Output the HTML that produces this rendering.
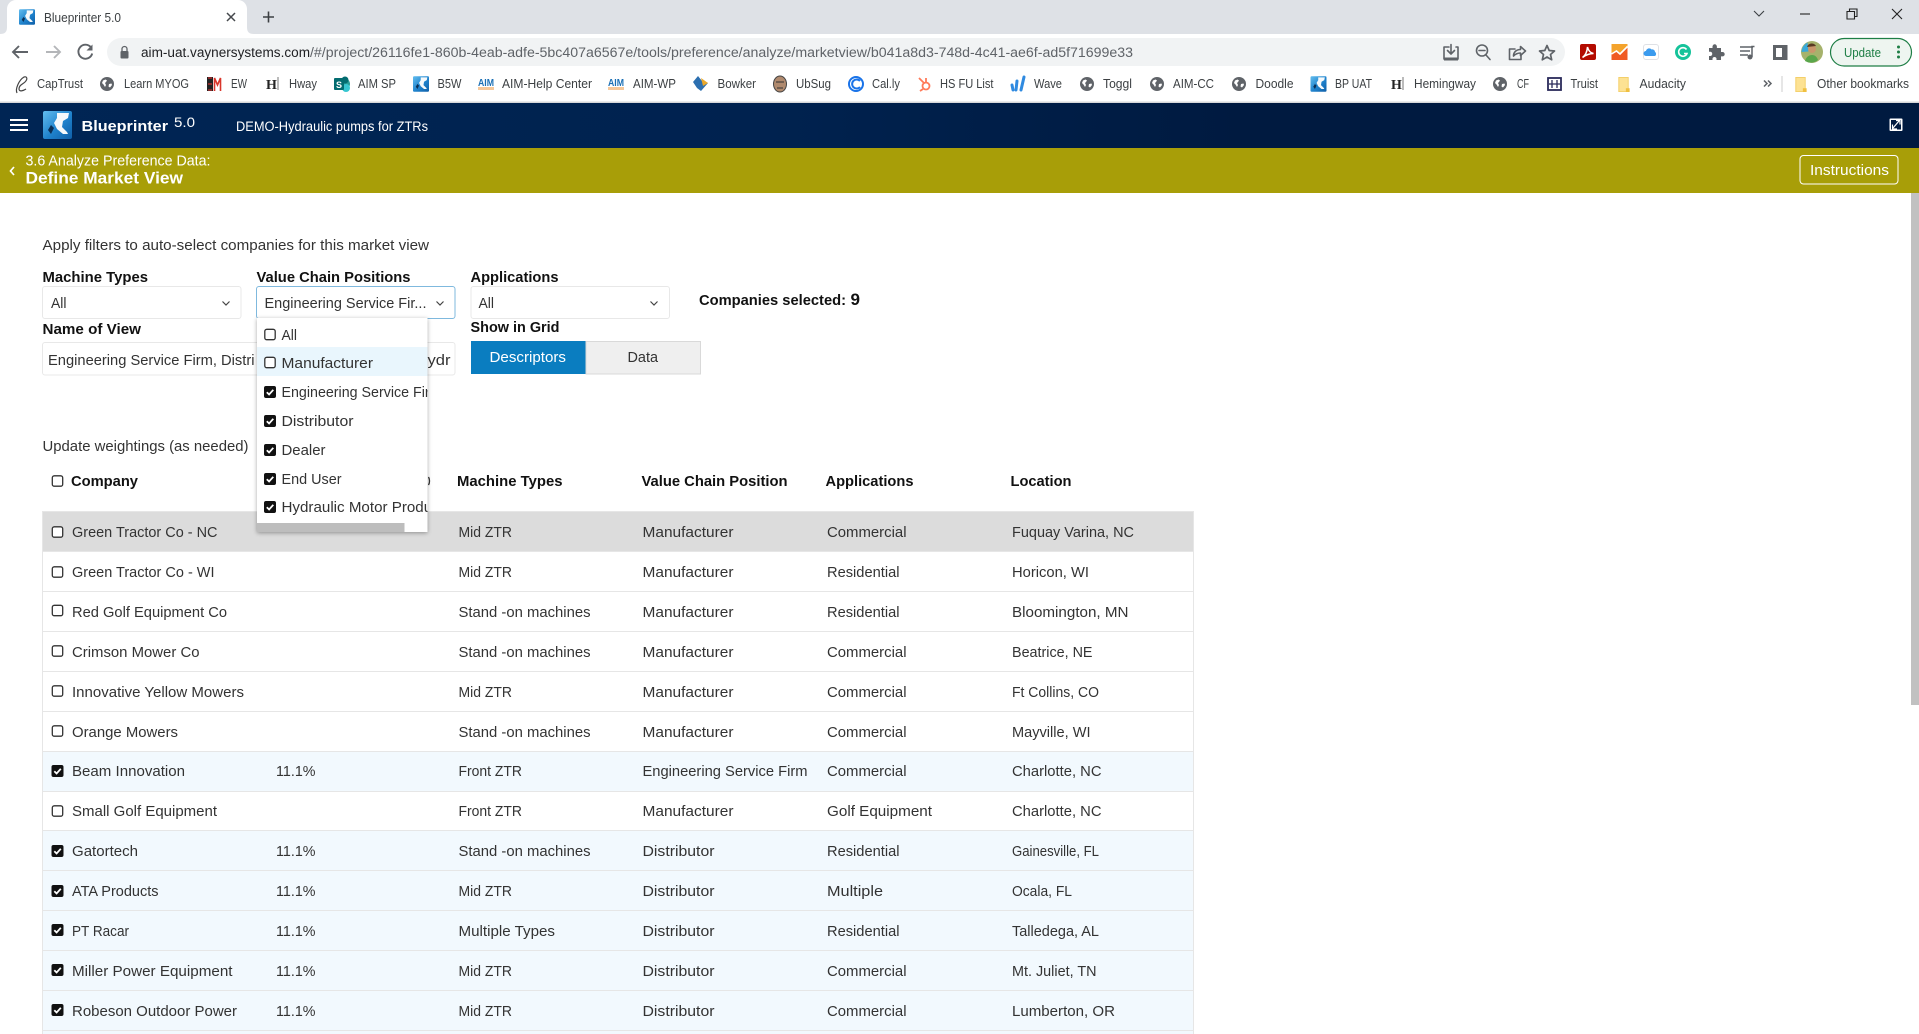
<!DOCTYPE html>
<html lang="en"><head><meta charset="utf-8"><title>Blueprinter 5.0</title>
<style>
html,body{margin:0;padding:0;background:#fff;width:1919px;height:1034px;overflow:hidden}
svg{display:block}
text{font-family:"Liberation Sans",Arial,sans-serif;font-size:14.5px;fill:#333;white-space:pre}
.b{font-weight:700;fill:#111}
.bm{font-size:12.5px;fill:#3c4043}
.w{fill:#fff}
.l{stroke:#5f6368;fill:none;stroke-width:1.6;stroke-linecap:round;stroke-linejoin:round}
</style></head><body>
<svg xmlns="http://www.w3.org/2000/svg" width="1919" height="1034" viewBox="0 0 1919 1034">
<defs>
<linearGradient id="hg" x1="0" x2="1" y1="0" y2="0"><stop offset="0" stop-color="#002554"/><stop offset=".4" stop-color="#00224f"/><stop offset=".65" stop-color="#001a40"/><stop offset="1" stop-color="#001a40"/></linearGradient>
<linearGradient id="lg" x1="0" x2="1" y1="0" y2="1"><stop offset="0" stop-color="#62bdef"/><stop offset=".55" stop-color="#1f82cc"/><stop offset="1" stop-color="#0f5fa8"/></linearGradient>
<symbol id="logo" viewBox="0 0 29 28"><rect width="29" height="28" rx="2" fill="url(#lg)"/><path d="M14 2h12l-1 5-5 3-1 6 5 5 1 2h-5l-6-5-3-6 3-5z" fill="#f6f9fb"/><path d="M5 19l3-5 3 3-3 6z" fill="#0b2f55"/></symbol>
<symbol id="globe" viewBox="0 0 14 14"><circle cx="7" cy="7" r="7" fill="#5f6368"/><path d="M3 3.500l2.500-1 1.500 1L6 5 5 6l1 2-1 2-1.500-2.500L2 6zM9 7l2.500-.5.500 1.500-2 2.500-1.500-1z" fill="#fff"/></symbol>
<symbol id="c0" viewBox="0 0 12 12"><rect x=".8" y=".8" width="10.400" height="10.400" rx="2" fill="#fff" stroke="#333" stroke-width="1.300"/></symbol>
<symbol id="c1" viewBox="0 0 12 12"><rect width="12" height="12" rx="2" fill="#111"/><path d="M2.800 6.200l2.300 2.300 4.200-4.700" fill="none" stroke="#fff" stroke-width="1.800"/></symbol>
<symbol id="fold" viewBox="0 0 12 16"><path d="M0 0h10.500v16H0z" fill="#fde293"/><path d="M.5.500h10v15h-10z" fill="none" stroke="#f3cf6a"/><rect x="8" y="12" width="4" height="4" fill="#f0c040"/></symbol>
<clipPath id="dd"><rect x="257" y="318" width="170.500" height="205"/></clipPath>
<filter id="sh" x="-10%" y="-10%" width="120%" height="120%"><feDropShadow dx="0" dy="1" stdDeviation="2" flood-color="#000" flood-opacity=".35"/></filter>
</defs>

<!-- tab strip -->
<rect width="1919" height="34" fill="#dee1e6"/>
<path d="M0 34c5 0 7-2 7-7V9c0-5 4-9 9-9h222c5 0 9 4 9 9v18c0 5 2 7 7 7z" fill="#fff"/>
<use href="#logo" x="19" y="9" width="16" height="16"/>
<text x="44" y="22" textLength="77" lengthAdjust="spacingAndGlyphs" style="font-size:12.5px;fill:#3c4043">Blueprinter 5.0</text>
<path d="M227 13l8 8M235 13l-8 8" stroke="#45484c" stroke-width="1.500" fill="none"/>
<path d="M263 17h11M268.500 11.500v11" stroke="#3c4043" stroke-width="1.600" fill="none"/>
<path d="M1754 11l5 5 5-5" stroke="#3c4043" fill="none" stroke-width="1.100"/>
<path d="M1800 14h10" stroke="#222" stroke-width="1.100"/>
<path d="M1847 11.500h7.500v7.500h-7.500zM1849.500 11.500v-2.500h7.500v7.500h-2.500" stroke="#222" fill="none" stroke-width="1.100"/>
<path d="M1892 9l10 10M1902 9l-10 10" stroke="#222" fill="none" stroke-width="1.100"/>

<!-- toolbar -->
<rect y="34" width="1919" height="68" fill="#fff"/>
<path d="M28 52H13M19 46l-6 6 6 6" stroke="#5f6368" stroke-width="1.900" fill="none"/>
<path d="M46 52h14M54 46l6 6-6 6" stroke="#b4b6b9" stroke-width="1.900" fill="none"/>
<path d="M91 47.500a7 7 0 1 0 1.200 6" stroke="#5f6368" stroke-width="1.900" fill="none"/><path d="M92.500 44.500v6h-6z" fill="#5f6368"/>
<rect x="107" y="38" width="1458" height="28" rx="14" fill="#f1f3f4"/>
<rect x="120.500" y="51" width="8" height="7.500" rx="1" fill="#5f6368"/><path d="M122 51v-2a2.500 2.500 0 0 1 5 0v2" stroke="#5f6368" stroke-width="1.300" fill="none"/>
<text x="141" y="57" textLength="169" lengthAdjust="spacingAndGlyphs" style="font-size:13.500px;fill:#202124">aim-uat.vaynersystems.com</text>
<text x="310" y="57" textLength="823" lengthAdjust="spacingAndGlyphs" style="font-size:13.500px;fill:#5f6368">/#/project/26116fe1-860b-4eab-adfe-5bc407a6567e/tools/preference/analyze/marketview/b041a8d3-748d-4c41-ae6f-ad5f71699e33</text>
<path class="l" d="M1449 47h-5v12h14v-12h-2M1451 44.500v9M1447.500 50.500l3.500 3.500 3.500-3.500"/><path d="M1444 57.500h14v3h-14z" fill="#5f6368"/>
<circle class="l" cx="1482" cy="50.500" r="5.500"/><path class="l" d="M1479 50.500h6M1486 55l4 4.500"/>
<path class="l" d="M1515 49h-5.500v10.500h11.500v-5"/><path class="l" d="M1513.500 56c0-4 3-6.500 7-6.500V46.500l5 4.500-5 4.500V53c-3 0-5 1-7 3z"/>
<path d="M1547 45.500l2.200 5 5.300.5-4 3.500 1.200 5.300-4.700-2.800-4.700 2.800 1.200-5.300-4-3.500 5.300-.5z" fill="none" stroke="#5f6368" stroke-width="1.700" stroke-linejoin="round"/>
<rect x="1580" y="44" width="16" height="16" rx="2" fill="#b30b00"/><path d="M1582.500 57.500c3-2 4.500-5 5-10.500 1 4 3 6 6 6.500-3.500 0-7 1-11 4z" fill="none" stroke="#fff" stroke-width="1.500"/>
<rect x="1611.500" y="44" width="16" height="16" fill="#f4a32c"/><path d="M1611.500 54l5-3 3.500 3 7.500-7.500V60h-16z" fill="#f05a22"/><path d="M1611.500 54l5-3 3.500 3 7.500-7.500" stroke="#fff" stroke-width="1.600" fill="none"/>
<rect x="1643.500" y="44.500" width="15" height="15" rx="2.500" fill="#fff" stroke="#dfe1e5"/><path d="M1646 56a2.500 2.500 0 0 1 0-5c.5-2.500 4-3.500 5.500-1.500 2-.5 3.500 1 3.500 2.500 1.500.5 1.500 4-.5 4z" fill="#3b9bee"/>
<circle cx="1683" cy="52" r="8" fill="#15c39a"/><path d="M1686.500 49.500a4.300 4.300 0 1 0 .5 4h-3" stroke="#fff" stroke-width="1.600" fill="none"/>
<path d="M1709 48h3.500v-1.500a2.200 2.200 0 0 1 4.400 0V48h4.100v4h1.500a2.200 2.200 0 0 1 0 4.400H1721v3.600h-4.500v-1.500a2.100 2.100 0 0 0-4 0V60H1709v-4h1.500a2.200 2.200 0 0 0 0-4.300H1709z" fill="#5f6368"/>
<path d="M1740 47h13M1740 51h10M1740 55h8" stroke="#5f6368" stroke-width="1.500"/><path d="M1754.500 46.500h-2.500v10.500" stroke="#5f6368" stroke-width="1.500" fill="none"/><circle cx="1750" cy="57" r="2.500" fill="#5f6368"/>
<rect x="1774.500" y="46.500" width="11.500" height="12" fill="none" stroke="#5f6368" stroke-width="3"/><rect x="1782" y="46" width="4.500" height="13" fill="#5f6368"/>
<circle cx="1812" cy="52" r="11" fill="#a6b26c"/><path d="M1801.500 52a11 11 0 0 1 6-9.500l1 9z" fill="#3aa8d8"/><path d="M1805 61c1-4 4-6 7-6s5 2 6 5a11 11 0 0 1-13 1z" fill="#5aa64b"/><circle cx="1812" cy="49" r="4" fill="#c9966b"/><path d="M1807 47c1-4 7-5 9-1z" fill="#5a3a22"/>
<rect x="1830.500" y="38.500" width="81" height="27.500" rx="13.700" fill="#eef5f0" stroke="#1e7e45" stroke-width="1.200"/>
<text x="1844" y="57" textLength="37" lengthAdjust="spacingAndGlyphs" style="font-size:12.500px;fill:#1e7e45">Update</text>
<circle cx="1898.500" cy="47" r="1.500" fill="#1e7e45"/><circle cx="1898.500" cy="52" r="1.500" fill="#1e7e45"/><circle cx="1898.500" cy="57" r="1.500" fill="#1e7e45"/>

<!-- bookmarks -->
<path d="M17 93c-2-4 2-13 7-16 3-1 4 2 1 5-2 2-6 3-6 7 0 3 4 2 7 0" fill="none" stroke="#444" stroke-width="1.200"/>
<text class="bm" x="37" y="88" textLength="46" lengthAdjust="spacingAndGlyphs">CapTrust</text>
<use href="#globe" x="100" y="77" width="14" height="14"/>
<text class="bm" x="124" y="88" textLength="65" lengthAdjust="spacingAndGlyphs">Learn MYOG</text>
<rect x="207" y="77" width="6" height="14" fill="#222"/><path d="M208 78h4M208 84h4M208 90h4" stroke="#e33" stroke-width="1"/><path d="M214.500 91V78l3 7 3-7v13" stroke="#d9362b" stroke-width="1.600" fill="none"/>
<text class="bm" x="231" y="88" textLength="16" lengthAdjust="spacingAndGlyphs">EW</text>
<text x="266" y="89" style="font-family:'Liberation Serif',serif;font-size:14px;font-weight:700;fill:#222">H</text><path d="M278 77v13" stroke="#777"/>
<text class="bm" x="289" y="88" textLength="28" lengthAdjust="spacingAndGlyphs">Hway</text>
<circle cx="344" cy="84" r="6" fill="#2a9d97"/><circle cx="346" cy="88" r="4" fill="#37c6d0"/><circle cx="345" cy="80" r="3.500" fill="#036c70"/><rect x="334" y="78" width="10" height="12" rx="1" fill="#036c70"/>
<text x="336" y="88" style="font-size:9px;font-weight:700;fill:#fff">S</text>
<text class="bm" x="358" y="88" textLength="38" lengthAdjust="spacingAndGlyphs">AIM SP</text>
<use href="#logo" x="413" y="76" width="16" height="16"/>
<text class="bm" x="437.500" y="88" textLength="24" lengthAdjust="spacingAndGlyphs">B5W</text>
<text x="478" y="86" textLength="16" lengthAdjust="spacingAndGlyphs" style="font-size:10px;font-weight:700;fill:#1a6fb5">AIM</text><rect x="478" y="87" width="16" height="3" fill="#f6c89a"/>
<text class="bm" x="502" y="88" textLength="90" lengthAdjust="spacingAndGlyphs">AIM-Help Center</text>
<text x="608" y="86" textLength="16" lengthAdjust="spacingAndGlyphs" style="font-size:10px;font-weight:700;fill:#1a6fb5">AIM</text><rect x="608" y="87" width="16" height="3" fill="#f6c89a"/>
<text class="bm" x="633" y="88" textLength="43" lengthAdjust="spacingAndGlyphs">AIM-WP</text>
<path d="M693 82l5-6 4 5 6 2-7 8-4-3z" fill="#2c6fb0"/><path d="M701 78l7 5-5 3z" fill="#e9a82c"/>
<text class="bm" x="717.500" y="88" textLength="38.500" lengthAdjust="spacingAndGlyphs">Bowker</text>
<ellipse cx="780" cy="84" rx="6.500" ry="8" fill="#b08a6e" stroke="#444"/><path d="M776 82h8M777 88h6" stroke="#333"/>
<text class="bm" x="796" y="88" textLength="35" lengthAdjust="spacingAndGlyphs">UbSug</text>
<circle cx="856" cy="84" r="7" fill="none" stroke="#1a73e8" stroke-width="2"/><path d="M860 81a4.500 4.500 0 1 0 0 6" fill="none" stroke="#1a73e8" stroke-width="2"/>
<text class="bm" x="872" y="88" textLength="28" lengthAdjust="spacingAndGlyphs">Cal.ly</text>
<circle cx="926" cy="86" r="3.500" fill="none" stroke="#ff7a59" stroke-width="1.800"/><path d="M924 83l-5-5M926 82v-4" stroke="#ff7a59" stroke-width="1.800"/><path d="M923 89l-3 2" stroke="#ff7a59" stroke-width="1.800"/>
<text class="bm" x="940" y="88" textLength="53.500" lengthAdjust="spacingAndGlyphs">HS FU List</text>
<path d="M1012 85l1 5M1017 81l-1 9M1024 77l-3 13" stroke="#2f8ae0" stroke-width="3" stroke-linecap="round"/>
<text class="bm" x="1034" y="88" textLength="28" lengthAdjust="spacingAndGlyphs">Wave</text>
<use href="#globe" x="1080" y="77" width="14" height="14"/>
<text class="bm" x="1103" y="88" textLength="29" lengthAdjust="spacingAndGlyphs">Toggl</text>
<use href="#globe" x="1150" y="77" width="14" height="14"/>
<text class="bm" x="1173" y="88" textLength="41" lengthAdjust="spacingAndGlyphs">AIM-CC</text>
<use href="#globe" x="1232" y="77" width="14" height="14"/>
<text class="bm" x="1255.500" y="88" textLength="38" lengthAdjust="spacingAndGlyphs">Doodle</text>
<use href="#logo" x="1310.500" y="76" width="16" height="16"/>
<text class="bm" x="1335" y="88" textLength="37" lengthAdjust="spacingAndGlyphs">BP UAT</text>
<text x="1391" y="89" style="font-family:'Liberation Serif',serif;font-size:14px;font-weight:700;fill:#222">H</text><path d="M1403 77v13" stroke="#777"/>
<text class="bm" x="1414" y="88" textLength="62" lengthAdjust="spacingAndGlyphs">Hemingway</text>
<use href="#globe" x="1493" y="77" width="14" height="14"/>
<text class="bm" x="1517" y="88" textLength="12" lengthAdjust="spacingAndGlyphs">CF</text>
<rect x="1548" y="78" width="13" height="12" fill="none" stroke="#2a2a5a" stroke-width="1.800"/><path d="M1552 80v8M1557 80v8M1549 84h11" stroke="#2a2a5a" stroke-width="1.300"/>
<text class="bm" x="1570.500" y="88" textLength="27.500" lengthAdjust="spacingAndGlyphs">Truist</text>
<use href="#fold" x="1618" y="77" width="12" height="15"/>
<text class="bm" x="1639.500" y="88" textLength="46.500" lengthAdjust="spacingAndGlyphs">Audacity</text>
<path d="M1764 80.500l3 3-3 3M1768 80.500l3 3-3 3" stroke="#5f6368" stroke-width="1.500" fill="none"/>
<path d="M1782 76v16" stroke="#ccc"/>
<use href="#fold" x="1795" y="77" width="12" height="15"/>
<text class="bm" x="1817" y="88" textLength="92" lengthAdjust="spacingAndGlyphs">Other bookmarks</text>
<rect y="101.500" width="1919" height="1.500" fill="#d7d8da"/>

<!-- app header -->
<rect y="103" width="1919" height="45" fill="url(#hg)"/>
<path d="M10 120h18M10 125h18M10 130h18" stroke="#fff" stroke-width="2"/>
<use href="#logo" x="43" y="111" width="29" height="28"/>
<text class="w" x="81.500" y="131" textLength="86.500" lengthAdjust="spacingAndGlyphs" style="font-weight:700">Blueprinter</text>
<text class="w" x="174" y="127" textLength="21" lengthAdjust="spacingAndGlyphs" style="font-size:14px">5.0</text>
<text class="w" x="236" y="131" textLength="192" lengthAdjust="spacingAndGlyphs" style="font-size:13.500px">DEMO-Hydraulic pumps for ZTRs</text>
<rect x="1889.500" y="118.500" width="13" height="12.500" rx="1" fill="#fff"/><rect x="1891" y="120" width="10" height="9.500" fill="#001a40"/><path d="M1893 128l6-7M1896 120.500h4v4M1892.500 124.500v4.500h4.500" stroke="#fff" stroke-width="1.200" fill="none"/>

<!-- olive bar -->
<rect y="148" width="1919" height="45" fill="#a89e08"/>
<path d="M14 167l-3.500 4 3.500 4" stroke="#fff" stroke-width="1.700" fill="none"/>
<text class="w" x="25.500" y="165.500" textLength="185" lengthAdjust="spacingAndGlyphs">3.6 Analyze Preference Data:</text>
<text class="w" x="25.500" y="183.500" textLength="157.500" lengthAdjust="spacingAndGlyphs" style="font-size:16.500px;font-weight:700">Define Market View</text>
<rect x="1800" y="155.500" width="98" height="28.500" rx="3.500" fill="none" stroke="#fff" stroke-width="1"/>
<text class="w" x="1810" y="175" textLength="79" lengthAdjust="spacingAndGlyphs">Instructions</text>

<!-- page scrollbar -->
<rect x="1911" y="193" width="8" height="512" fill="#c1c1c1"/>

<!-- filters -->
<text x="42.500" y="250" textLength="386.500" lengthAdjust="spacingAndGlyphs">Apply filters to auto-select companies for this market view</text>
<text class="b" x="42.500" y="282" textLength="105.500" lengthAdjust="spacingAndGlyphs">Machine Types</text>
<text class="b" x="256.500" y="282" textLength="154" lengthAdjust="spacingAndGlyphs">Value Chain Positions</text>
<text class="b" x="470.500" y="282" textLength="88" lengthAdjust="spacingAndGlyphs">Applications</text>

<rect x="42.500" y="286.500" width="198.500" height="32" rx="2.500" fill="#fff" stroke="#e8e8e8"/>
<text x="51" y="308" textLength="15.500" lengthAdjust="spacingAndGlyphs">All</text>
<path d="M222.500 301.500l3.500 3.500 3.500-3.500" stroke="#444" stroke-width="1.200" fill="none"/>
<rect x="256.500" y="286.500" width="198.500" height="32" rx="2.500" fill="#fff" stroke="#7fb9de"/>
<text x="264.500" y="308" textLength="162" lengthAdjust="spacingAndGlyphs">Engineering Service Fir...</text>
<path d="M436.500 301.500l3.500 3.500 3.500-3.500" stroke="#444" stroke-width="1.200" fill="none"/>
<rect x="471" y="286.500" width="198.500" height="32" rx="2.500" fill="#fff" stroke="#e8e8e8"/>
<text x="478.500" y="308" textLength="15.500" lengthAdjust="spacingAndGlyphs">All</text>
<path d="M650.500 301.500l3.500 3.500 3.500-3.500" stroke="#444" stroke-width="1.200" fill="none"/>

<text class="b" x="699" y="305" textLength="147" lengthAdjust="spacingAndGlyphs">Companies selected:</text>
<text class="b" x="850.500" y="305" textLength="9.500" lengthAdjust="spacingAndGlyphs" style="font-size:17px">9</text>

<text class="b" x="42.500" y="334" textLength="98.500" lengthAdjust="spacingAndGlyphs">Name of View</text>
<rect x="42.500" y="342.500" width="412.500" height="32.500" rx="2.500" fill="#fff" stroke="#e8e8e8"/>
<text x="48" y="365" textLength="206.500" lengthAdjust="spacingAndGlyphs">Engineering Service Firm, Distri</text>
<text x="427.500" y="365" textLength="23" lengthAdjust="spacingAndGlyphs">ydr</text>

<text class="b" x="470.500" y="332" textLength="89" lengthAdjust="spacingAndGlyphs">Show in Grid</text>
<rect x="471" y="341" width="115" height="33" fill="#0a7dc0"/>
<rect x="586" y="341.500" width="114.500" height="32.500" fill="#efefef" stroke="#d9d9d9"/>
<text class="w" x="489.500" y="362" textLength="76.500" lengthAdjust="spacingAndGlyphs">Descriptors</text>
<text x="627.500" y="362" textLength="30.500" lengthAdjust="spacingAndGlyphs">Data</text>

<text x="42.500" y="451" textLength="206" lengthAdjust="spacingAndGlyphs">Update weightings (as needed)</text>

<!-- table header -->
<use href="#c0" x="51.500" y="475" width="12" height="12"/>
<text class="b" x="71" y="486" textLength="67" lengthAdjust="spacingAndGlyphs">Company</text>
<path d="M428.500 477a4 6 0 0 1 0 8" stroke="#333" stroke-width="1.300" fill="none"/>
<text class="b" x="457" y="486" textLength="105.500" lengthAdjust="spacingAndGlyphs">Machine Types</text>
<text class="b" x="641.500" y="486" textLength="146" lengthAdjust="spacingAndGlyphs">Value Chain Position</text>
<text class="b" x="825.500" y="486" textLength="88" lengthAdjust="spacingAndGlyphs">Applications</text>
<text class="b" x="1010.500" y="486" textLength="61" lengthAdjust="spacingAndGlyphs">Location</text>

<!-- table rows backgrounds -->
<rect x="42" y="511" width="1152" height="40" fill="#dcdcdc"/>
<rect x="42" y="751" width="1152" height="40" fill="#f2f9fe"/>
<rect x="42" y="830" width="1152" height="204" fill="#f2f9fe"/>
<path d="M42 511.500h1152M42 551.500h1152M42 591.500h1152M42 631.500h1152M42 671.500h1152M42 711.500h1152M42 751.500h1152M42 791.500h1152M42 830.500h1152M42 870.500h1152M42 910.500h1152M42 950.500h1152M42 990.500h1152M42 1030.500h1152" stroke="#e6e6e6"/>
<path d="M42.500 511v523M1193.500 511v523" stroke="#e6e6e6"/>

<!-- row 1 -->
<use href="#c0" x="51.500" y="526" width="12" height="12"/>
<text x="72" y="537" textLength="145.500" lengthAdjust="spacingAndGlyphs">Green Tractor Co - NC</text>
<text x="458.500" y="537" textLength="53.500" lengthAdjust="spacingAndGlyphs">Mid ZTR</text>
<text x="642.500" y="537" textLength="91" lengthAdjust="spacingAndGlyphs">Manufacturer</text>
<text x="827" y="537" textLength="79.500" lengthAdjust="spacingAndGlyphs">Commercial</text>
<text x="1012" y="537" textLength="122" lengthAdjust="spacingAndGlyphs">Fuquay Varina, NC</text>
<!-- row 2 -->
<use href="#c0" x="51.500" y="566" width="12" height="12"/>
<text x="72" y="577" textLength="142.500" lengthAdjust="spacingAndGlyphs">Green Tractor Co - WI</text>
<text x="458.500" y="577" textLength="53.500" lengthAdjust="spacingAndGlyphs">Mid ZTR</text>
<text x="642.500" y="577" textLength="91" lengthAdjust="spacingAndGlyphs">Manufacturer</text>
<text x="827" y="577" textLength="72.500" lengthAdjust="spacingAndGlyphs">Residential</text>
<text x="1012" y="577" textLength="77" lengthAdjust="spacingAndGlyphs">Horicon, WI</text>
<!-- row 3 -->
<use href="#c0" x="51.500" y="604.500" width="12" height="12"/>
<text x="72" y="617" textLength="155" lengthAdjust="spacingAndGlyphs">Red Golf Equipment Co</text>
<text x="458.500" y="617" textLength="132" lengthAdjust="spacingAndGlyphs">Stand -on machines</text>
<text x="642.500" y="617" textLength="91" lengthAdjust="spacingAndGlyphs">Manufacturer</text>
<text x="827" y="617" textLength="72.500" lengthAdjust="spacingAndGlyphs">Residential</text>
<text x="1012" y="617" textLength="116.500" lengthAdjust="spacingAndGlyphs">Bloomington, MN</text>
<!-- row 4 -->
<use href="#c0" x="51.500" y="645" width="12" height="12"/>
<text x="72" y="657" textLength="127.500" lengthAdjust="spacingAndGlyphs">Crimson Mower Co</text>
<text x="458.500" y="657" textLength="132" lengthAdjust="spacingAndGlyphs">Stand -on machines</text>
<text x="642.500" y="657" textLength="91" lengthAdjust="spacingAndGlyphs">Manufacturer</text>
<text x="827" y="657" textLength="79.500" lengthAdjust="spacingAndGlyphs">Commercial</text>
<text x="1012" y="657" textLength="80.500" lengthAdjust="spacingAndGlyphs">Beatrice, NE</text>
<!-- row 5 -->
<use href="#c0" x="51.500" y="685" width="12" height="12"/>
<text x="72" y="697" textLength="172" lengthAdjust="spacingAndGlyphs">Innovative Yellow Mowers</text>
<text x="458.500" y="697" textLength="53.500" lengthAdjust="spacingAndGlyphs">Mid ZTR</text>
<text x="642.500" y="697" textLength="91" lengthAdjust="spacingAndGlyphs">Manufacturer</text>
<text x="827" y="697" textLength="79.500" lengthAdjust="spacingAndGlyphs">Commercial</text>
<text x="1012" y="697" textLength="87" lengthAdjust="spacingAndGlyphs">Ft Collins, CO</text>
<!-- row 6 -->
<use href="#c0" x="51.500" y="725" width="12" height="12"/>
<text x="72" y="737" textLength="106" lengthAdjust="spacingAndGlyphs">Orange Mowers</text>
<text x="458.500" y="737" textLength="132" lengthAdjust="spacingAndGlyphs">Stand -on machines</text>
<text x="642.500" y="737" textLength="91" lengthAdjust="spacingAndGlyphs">Manufacturer</text>
<text x="827" y="737" textLength="79.500" lengthAdjust="spacingAndGlyphs">Commercial</text>
<text x="1012" y="737" textLength="78.500" lengthAdjust="spacingAndGlyphs">Mayville, WI</text>
<!-- row 7 -->
<use href="#c1" x="51.500" y="765" width="12" height="12"/>
<text x="72" y="776" textLength="113" lengthAdjust="spacingAndGlyphs">Beam Innovation</text>
<text x="276" y="776" textLength="39.500" lengthAdjust="spacingAndGlyphs">11.1%</text>
<text x="458.500" y="776" textLength="63.500" lengthAdjust="spacingAndGlyphs">Front ZTR</text>
<text x="642.500" y="776" textLength="165" lengthAdjust="spacingAndGlyphs">Engineering Service Firm</text>
<text x="827" y="776" textLength="79.500" lengthAdjust="spacingAndGlyphs">Commercial</text>
<text x="1012" y="776" textLength="89.500" lengthAdjust="spacingAndGlyphs">Charlotte, NC</text>
<!-- row 8 -->
<use href="#c0" x="51.500" y="805" width="12" height="12"/>
<text x="72" y="816" textLength="145" lengthAdjust="spacingAndGlyphs">Small Golf Equipment</text>
<text x="458.500" y="816" textLength="63.500" lengthAdjust="spacingAndGlyphs">Front ZTR</text>
<text x="642.500" y="816" textLength="91" lengthAdjust="spacingAndGlyphs">Manufacturer</text>
<text x="827" y="816" textLength="105" lengthAdjust="spacingAndGlyphs">Golf Equipment</text>
<text x="1012" y="816" textLength="89.500" lengthAdjust="spacingAndGlyphs">Charlotte, NC</text>
<!-- row 9 -->
<use href="#c1" x="51.500" y="845" width="12" height="12"/>
<text x="72" y="856" textLength="66" lengthAdjust="spacingAndGlyphs">Gatortech</text>
<text x="276" y="856" textLength="39.500" lengthAdjust="spacingAndGlyphs">11.1%</text>
<text x="458.500" y="856" textLength="132" lengthAdjust="spacingAndGlyphs">Stand -on machines</text>
<text x="642.500" y="856" textLength="72" lengthAdjust="spacingAndGlyphs">Distributor</text>
<text x="827" y="856" textLength="72.500" lengthAdjust="spacingAndGlyphs">Residential</text>
<text x="1012" y="856" textLength="87" lengthAdjust="spacingAndGlyphs">Gainesville, FL</text>
<!-- row 10 -->
<use href="#c1" x="51.500" y="885" width="12" height="12"/>
<text x="72" y="896" textLength="86.500" lengthAdjust="spacingAndGlyphs">ATA Products</text>
<text x="276" y="896" textLength="39.500" lengthAdjust="spacingAndGlyphs">11.1%</text>
<text x="458.500" y="896" textLength="53.500" lengthAdjust="spacingAndGlyphs">Mid ZTR</text>
<text x="642.500" y="896" textLength="72" lengthAdjust="spacingAndGlyphs">Distributor</text>
<text x="827" y="896" textLength="56" lengthAdjust="spacingAndGlyphs">Multiple</text>
<text x="1012" y="896" textLength="60" lengthAdjust="spacingAndGlyphs">Ocala, FL</text>
<!-- row 11 -->
<use href="#c1" x="51.500" y="924" width="12" height="12"/>
<text x="72" y="936" textLength="57" lengthAdjust="spacingAndGlyphs">PT Racar</text>
<text x="276" y="936" textLength="39.500" lengthAdjust="spacingAndGlyphs">11.1%</text>
<text x="458.500" y="936" textLength="96.500" lengthAdjust="spacingAndGlyphs">Multiple Types</text>
<text x="642.500" y="936" textLength="72" lengthAdjust="spacingAndGlyphs">Distributor</text>
<text x="827" y="936" textLength="72.500" lengthAdjust="spacingAndGlyphs">Residential</text>
<text x="1012" y="936" textLength="87" lengthAdjust="spacingAndGlyphs">Talledega, AL</text>
<!-- row 12 -->
<use href="#c1" x="51.500" y="964" width="12" height="12"/>
<text x="72" y="976" textLength="160.500" lengthAdjust="spacingAndGlyphs">Miller Power Equipment</text>
<text x="276" y="976" textLength="39.500" lengthAdjust="spacingAndGlyphs">11.1%</text>
<text x="458.500" y="976" textLength="53.500" lengthAdjust="spacingAndGlyphs">Mid ZTR</text>
<text x="642.500" y="976" textLength="72" lengthAdjust="spacingAndGlyphs">Distributor</text>
<text x="827" y="976" textLength="79.500" lengthAdjust="spacingAndGlyphs">Commercial</text>
<text x="1012" y="976" textLength="84.500" lengthAdjust="spacingAndGlyphs">Mt. Juliet, TN</text>
<!-- row 13 -->
<use href="#c1" x="51.500" y="1004" width="12" height="12"/>
<text x="72" y="1016" textLength="165" lengthAdjust="spacingAndGlyphs">Robeson Outdoor Power</text>
<text x="276" y="1016" textLength="39.500" lengthAdjust="spacingAndGlyphs">11.1%</text>
<text x="458.500" y="1016" textLength="53.500" lengthAdjust="spacingAndGlyphs">Mid ZTR</text>
<text x="642.500" y="1016" textLength="72" lengthAdjust="spacingAndGlyphs">Distributor</text>
<text x="827" y="1016" textLength="79.500" lengthAdjust="spacingAndGlyphs">Commercial</text>
<text x="1012" y="1016" textLength="103" lengthAdjust="spacingAndGlyphs">Lumberton, OR</text>

<!-- dropdown panel -->
<rect x="257" y="318" width="170.500" height="214" fill="#fff" filter="url(#sh)"/>
<rect x="257" y="347" width="170.500" height="29" fill="#e9f6fd"/>
<rect x="257" y="523" width="147.500" height="9" fill="#bdbdbd"/>
<g clip-path="url(#dd)">
<use href="#c0" x="264" y="328.500" width="12" height="12"/><text x="281.500" y="340" textLength="15.500" lengthAdjust="spacingAndGlyphs">All</text>
<use href="#c0" x="264" y="356.500" width="12" height="12"/><text x="281.500" y="368" textLength="91.500" lengthAdjust="spacingAndGlyphs">Manufacturer</text>
<use href="#c1" x="264" y="386" width="12" height="12"/><text x="281.500" y="397" textLength="160" lengthAdjust="spacingAndGlyphs">Engineering Service Firm</text>
<use href="#c1" x="264" y="415" width="12" height="12"/><text x="281.500" y="426" textLength="72" lengthAdjust="spacingAndGlyphs">Distributor</text>
<use href="#c1" x="264" y="444" width="12" height="12"/><text x="281.500" y="455" textLength="44" lengthAdjust="spacingAndGlyphs">Dealer</text>
<use href="#c1" x="264" y="473" width="12" height="12"/><text x="281.500" y="484" textLength="60" lengthAdjust="spacingAndGlyphs">End User</text>
<use href="#c1" x="264" y="501" width="12" height="12"/><text x="281.500" y="512" textLength="170" lengthAdjust="spacingAndGlyphs">Hydraulic Motor Products</text>
</g>
</svg>
</body></html>
